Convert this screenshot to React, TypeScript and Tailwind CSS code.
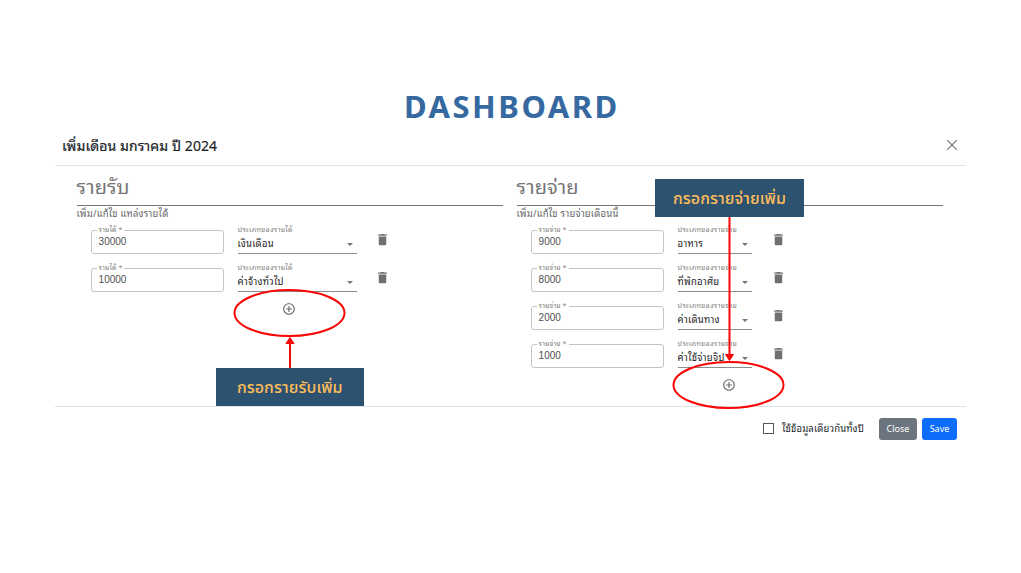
import React from 'react';

function TrashIcon() {
  return (
    <svg viewBox="0 0 24 24" className="block h-[15px] w-[15px] fill-[#6f6f6f]">
      <path d="M6 19c0 1.1.9 2 2 2h8c1.1 0 2-.9 2-2V7H6v12zM19 4h-3.5l-1-1h-5l-1 1H5v2h14V4z" />
    </svg>
  );
}

function AddIcon() {
  return (
    <svg viewBox="0 0 24 24" className="block h-[14px] w-[14px] fill-[#6b6b6b]">
      <path d="M13 7h-2v4H7v2h4v4h2v-4h4v-2h-4V7zm-1-5C6.48 2 2 6.48 2 12s4.48 10 10 10 10-4.48 10-10S17.52 2 12 2zm0 18c-4.41 0-8-3.59-8-8s3.59-8 8-8 8 3.59 8 8-3.59 8-8 8z" />
    </svg>
  );
}

type Entry = { amount: string; kind: string };

function EntryRow({ entry, label, kindLabel, wide }: { entry: Entry; label: string; kindLabel: string; wide: boolean }) {
  return (
    <div className="flex h-[38px] items-start pl-[14px]">
      <fieldset className="h-[29px] w-[133px] shrink-0 rounded-[3px] border border-[#c4c4c4] pl-[5px]">
        <legend className="h-[10px] whitespace-nowrap px-[2px] text-[7px] leading-[8px] tracking-[0.1px] text-[#808080]">{label} *</legend>
        <div className="pl-[2px] font-['Liberation_Sans'] text-[10px] leading-[14px] text-[#505050]">{entry.amount}</div>
      </fieldset>
      <div className={`ml-[14px] h-[29px] shrink-0 border-b border-[#8c8c8c] ${wide ? 'w-[119px]' : 'w-[74.5px]'}`}>
        <div className="h-[10px] whitespace-nowrap text-[7px] leading-[8px] tracking-[0.3px] text-[#808080]">{kindLabel}</div>
        <div className="flex h-[18px] items-center justify-between pr-[4px]">
          <span className="mb-[2px] whitespace-nowrap text-[9.5px] leading-[16px] tracking-[0.25px] text-[#222]">{entry.kind}</span>
          <svg viewBox="0 0 6 3" className="h-[3px] w-[6px] fill-[#757575]">
            <path d="M0 0h6L3 3z" />
          </svg>
        </div>
      </div>
      <div className="ml-[18.5px] mt-[7px]">
        <TrashIcon />
      </div>
    </div>
  );
}

function Column(props: { title: string; hint: string; label: string; kindLabel: string; entries: Entry[]; wide: boolean }) {
  return (
    <section className="w-[426px]">
      <h2 className="flex h-[40px] items-center border-b border-[#757575] pb-[2px] text-[20px] leading-[38px] tracking-[0.1px] text-[#757575]">
        <span className="whitespace-nowrap">{props.title}</span>
      </h2>
      <p className="h-[19px] whitespace-nowrap text-[9.5px] leading-[14px] tracking-[0.2px] text-[#666]">{props.hint}</p>
      {props.entries.map((e) => (
        <EntryRow key={e.amount} entry={e} label={props.label} kindLabel={props.kindLabel} wide={props.wide} />
      ))}
      <div className="flex justify-center pr-[2px] pt-px">
        <AddIcon />
      </div>
    </section>
  );
}

export default function App() {
  return (
    <main className="relative h-[573px] w-[1021px] overflow-hidden bg-white pl-[55px] pt-[84px] font-['Noto_Sans','Noto_Sans_Thai',sans-serif]">
      <h1 className="h-[43px] w-[911px] pl-[349px] text-[31px] font-bold leading-[44px] tracking-[2.5px] text-[#35699f]">DASHBOARD</h1>
      <div className="w-[911px] font-['Noto_Sans_Thai_Looped','Loma','Waree','Garuda','Umpush','Tlwg_Typo','Noto_Sans',sans-serif]">
        <header className="flex h-[39px] items-center justify-between border-b border-[#dee2e6] pl-[7px] pr-[9px]">
          <span className="mb-[2px] whitespace-nowrap text-[14px] leading-[20px] tracking-[0.08px] text-[#212529] [-webkit-text-stroke:0.2px_#212529]">เพิ่มเดือน มกราคม ปี 2024</span>
          <svg viewBox="0 0 10 10" className="mb-[2px] h-[10px] w-[10px] stroke-[#777]">
            <path d="M0 0l10 10M10 0L0 10" strokeWidth="1.2" />
          </svg>
        </header>
        <div className="flex h-[241px] gap-[14px] border-b border-[#dee2e6] pl-[21.6px]">
          <Column
            title="รายรับ"
            hint="เพิ่ม/แก้ไข แหล่งรายได้"
            label="รายได้"
            kindLabel="ประเภทของรายได้"
            wide
            entries={[
              { amount: '30000', kind: 'เงินเดือน' },
              { amount: '10000', kind: 'ค่าจ้างทั่วไป' },
            ]}
          />
          <Column
            title="รายจ่าย"
            hint="เพิ่ม/แก้ไข รายจ่ายเดือนนี้"
            label="รายจ่าย"
            kindLabel="ประเภทของรายจ่าย"
            wide={false}
            entries={[
              { amount: '9000', kind: 'อาหาร' },
              { amount: '8000', kind: 'ที่พักอาศัย' },
              { amount: '2000', kind: 'ค่าเดินทาง' },
              { amount: '1000', kind: 'ค่าใช้จ่ายจิป' },
            ]}
          />
        </div>
        <footer className="flex h-[43px] items-center justify-end pr-[9px]">
          <span className="mr-[8px] h-[11px] w-[11px] border border-[#555]" />
          <span className="mb-[2px] mr-[15px] whitespace-nowrap text-[9.5px] leading-[16px] tracking-[0.15px] text-[#212529]">ใช้ข้อมูลเดียวกันทั้งปี</span>
          <button className="mr-[5px] h-[22px] w-[38px] rounded-[3px] bg-[#6c757d] font-['Noto_Sans'] text-[9px] text-white">Close</button>
          <button className="h-[22px] w-[35px] rounded-[3px] bg-[#0d6efd] font-['Noto_Sans'] text-[9px] text-white">Save</button>
        </footer>
      </div>

      <svg viewBox="0 0 1021 573" className="absolute left-0 top-0 h-[573px] w-[1021px] fill-none stroke-[#fb0505]" strokeWidth="2">
        <ellipse cx="289.5" cy="313" rx="55" ry="23" />
        <ellipse cx="728.5" cy="385" rx="55" ry="23" />
        <path d="M290 368V342M729.5 217V356" />
        <path d="M290 337.5l-4 6h8zM729.5 360.5l-4-6h8z" fill="#fb0505" strokeWidth="1" />
      </svg>
      <div className="absolute left-[215.5px] top-[368px] flex h-[38px] w-[148.5px] items-center justify-center bg-[#2c5270] text-[16px] font-medium tracking-[0.1px] text-[#ffbd59]">
        <span className="whitespace-nowrap">กรอกรายรับเพิ่ม</span>
      </div>
      <div className="absolute left-[655px] top-[179px] flex h-[38px] w-[149px] items-center justify-center bg-[#2c5270] text-[16px] font-medium tracking-[0.1px] text-[#ffbd59]">
        <span className="whitespace-nowrap">กรอกรายจ่ายเพิ่ม</span>
      </div>
    </main>
  );
}
